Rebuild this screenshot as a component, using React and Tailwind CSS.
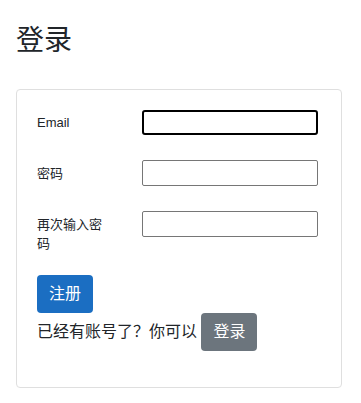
const font = { fontFamily: '"Liberation Sans", "Noto Sans CJK SC", sans-serif' }

function Field({ label, focused }) {
  return (
    <div className="flex items-baseline">
      <label className="w-[105px] shrink-0 pr-[30px] text-[13px] leading-[19.5px] text-[#212529]">{label}</label>
      <input
        type="text"
        className={
          focused
            ? 'h-[25px] w-[176px] rounded-[3px] border-2 border-black px-[2px] text-[13px] outline-none'
            : 'h-[26px] w-[176px] rounded-[2px] border border-[#767676] px-[2px] text-[13px] outline-none'
        }
      />
    </div>
  )
}

export default function App() {
  return (
    <div className="min-h-[403px] bg-white px-4 pt-[24px] text-[#212529]" style={font}>
      <h1 className="text-[28px] font-normal leading-[33px]">登录</h1>
      <div className="mt-[32px] w-[326px] rounded-[4px] border border-[#dfdfdf] px-5 pt-5 pb-[36px]">
        <div className="flex flex-col gap-[25px]">
          <Field label="Email" focused />
          <Field label="密码" />
          <Field label="再次输入密码" />
        </div>
        <button className="mt-[21px] block h-[38px] rounded-[4px] bg-[#1b6ec2] px-3 text-[16px] leading-6 text-white">
          注册
        </button>
        <p className="text-[16px] leading-6">
          已经有账号了？你可以{' '}
          <button className="inline-block h-[38px] rounded-[4px] bg-[#6c757d] px-3 align-baseline text-[16px] leading-6 text-white">
            登录
          </button>
        </p>
      </div>
    </div>
  )
}
